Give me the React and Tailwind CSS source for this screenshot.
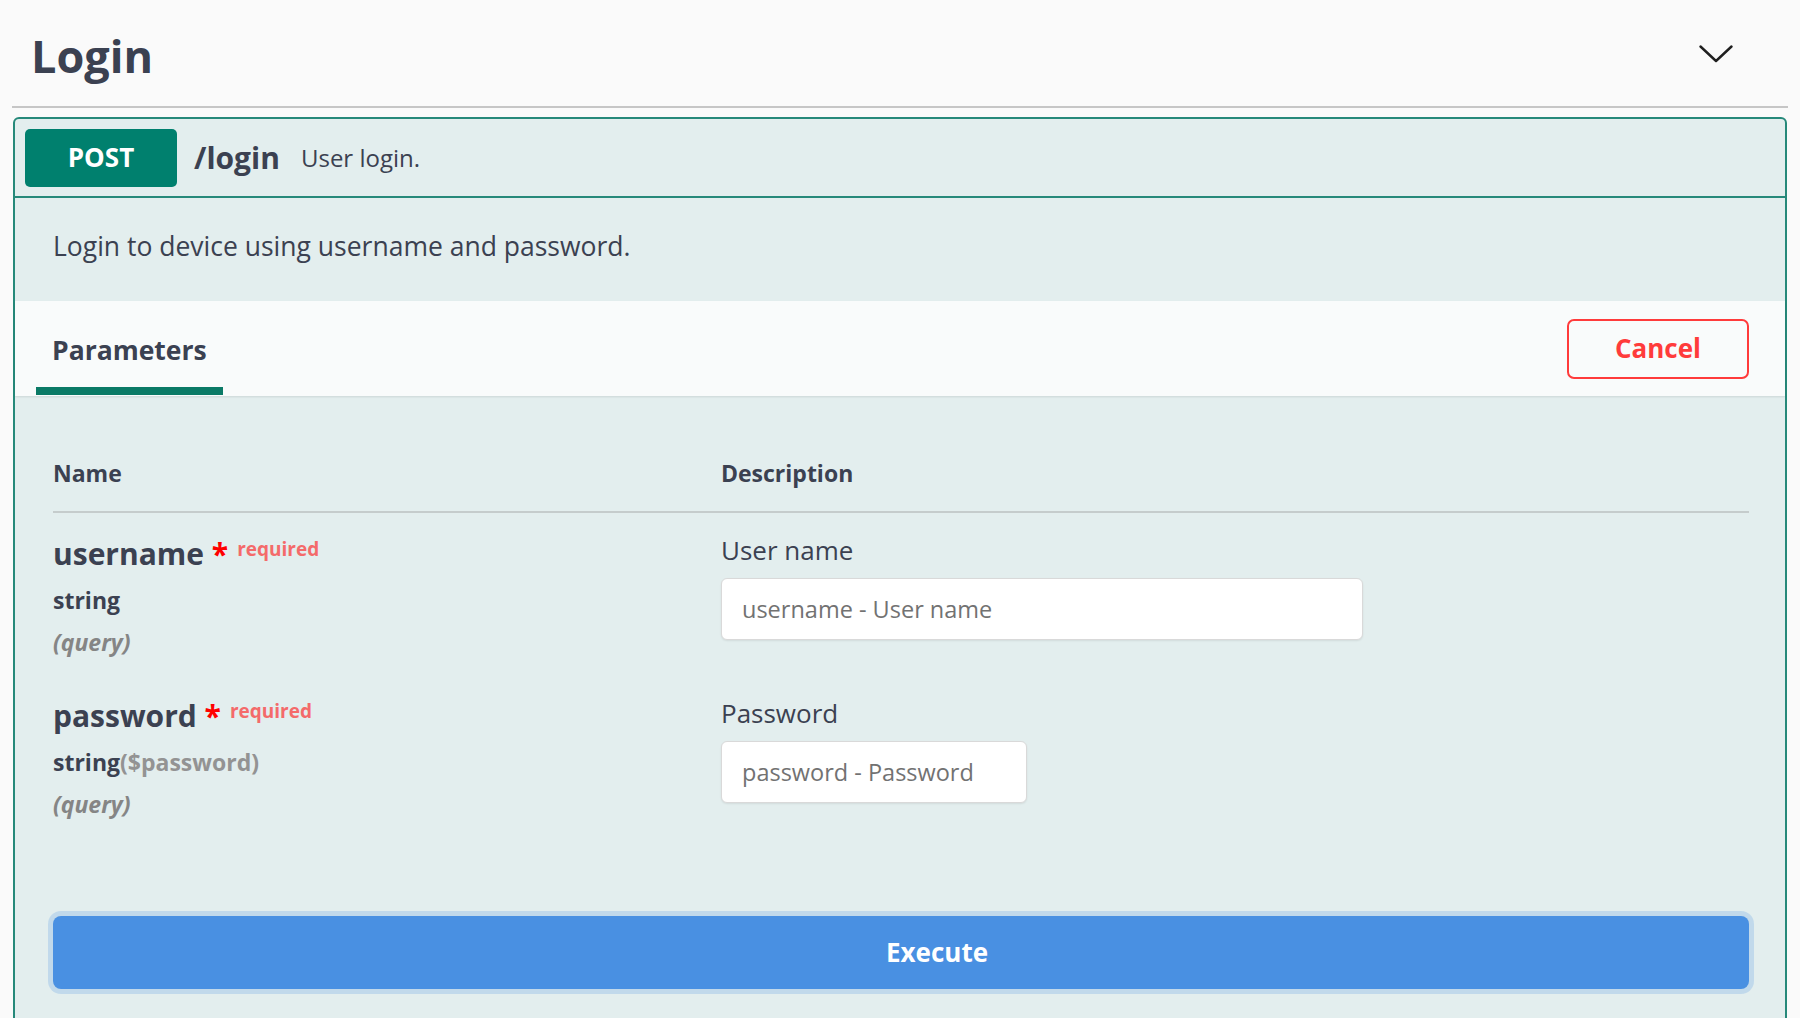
import React from 'react';

const params = [
  { name: 'username', type: 'string', format: null, label: 'User name', placeholder: 'username - User name', width: 'w-[642px]' },
  { name: 'password', type: 'string', format: '($password)', label: 'Password', placeholder: 'password - Password', width: 'w-[306px]' },
];

const Chevron = () => (
  <svg width="34" height="18" viewBox="0 0 34 18" fill="none">
    <path d="M1.5 1.5 L17 16 L32.5 1.5" stroke="#1f1f1f" strokeWidth="2.4" strokeLinecap="round" strokeLinejoin="round" />
  </svg>
);

const ParamRow = ({ p, first }) => (
  <div className={`grid grid-cols-[668px_1fr] ${first ? 'pt-[17px]' : 'pt-[36px]'}`}>
    <div className={first ? 'pt-[1px]' : ''}>
      <div className="text-[30px] leading-[36px] font-bold text-[#3b4151] whitespace-nowrap">
        {p.name}
        <span className="text-[#ff0000]"> *</span>
        <span className="ml-[9px] text-[19px] font-bold text-[#f46a6a] align-[9px]">required</span>
      </div>
      <div className="mt-[13px] text-[23px] leading-[30px] font-bold text-[#3b4151]">
        {p.type}
        {p.format && <span className="font-bold text-[#939393]">{p.format}</span>}
      </div>
      <div className="mt-[12px] text-[23px] leading-[30px] font-bold italic text-[#858585]">(query)</div>
    </div>
    <div className="pt-[2px]">
      <div className="text-[26px] leading-[36px] text-[#3b4151]">{p.label}</div>
      <input
        placeholder={p.placeholder}
        className={`mt-[10px] h-[62px] ${p.width} bg-white border border-[#d9d9d9] rounded-[6px] pl-[20px] text-[23.5px] text-[#3b4151] placeholder:text-[#727272] shadow-[0_1px_2px_rgba(0,0,0,0.08)] outline-none`}
      />
    </div>
  </div>
);

export default function App() {
  return (
    <div className="h-screen overflow-hidden bg-[#fafafa] px-[12px] font-['Open_Sans',sans-serif] text-[#3b4151]">
      <div className="flex items-start justify-between h-[108px] border-b-2 border-[#c6c6c6] pl-[19px] pr-[55px]">
        <h1 className="pt-[26px] text-[45px] leading-[60px] font-bold text-[#3b4151]">Login</h1>
        <div className="mt-[45px]"><Chevron /></div>
      </div>

      <div className="mt-[9px] mx-[1px] border-2 border-[#26897a] rounded-[6px] bg-[#e3eeee]">
        <div className="flex items-center h-[79px] px-[10px] border-b-2 border-[#26897a]">
          <div className="w-[152px] h-[58px] rounded-[5px] bg-[#00806e] flex items-center justify-center text-white text-[26px] font-bold">POST</div>
          <span className="ml-[17px] text-[30px] font-bold text-[#3b4151]">/login</span>
          <span className="ml-[21px] text-[24px] text-[#3b4151]">User login.</span>
        </div>

        <div className="pt-[30px] pb-[37px] pl-[38px] text-[26.5px] leading-[36px] text-[#3b4151]">
          Login to device using username and password.
        </div>

        <div className="flex justify-between h-[95px] bg-[#f9fbfb] shadow-[0_1px_2px_rgba(0,0,0,0.1)] pl-[21px] pr-[36px]">
          <div className="flex flex-col pt-[31px]">
            <div className="px-[16px] text-[26.5px] leading-[36px] font-bold text-[#3b4151]">Parameters</div>
            <div className="mt-[19px] h-[8px] bg-[#0b7a66]" />
          </div>
          <button className="self-center w-[182px] h-[60px] rounded-[7px] border-2 border-[#ff3b3b] text-[#ff3b3b] text-[26px] font-bold">Cancel</button>
        </div>

        <div className="pl-[38px] pr-[36px] pb-[40px]">
          <div className="grid grid-cols-[668px_1fr] pt-[62px] pb-[23px] border-b-2 border-[#c5cccc] text-[23px] leading-[30px] font-bold text-[#3b4151]">
            <div>Name</div>
            <div>Description</div>
          </div>
          {params.map((p, i) => (
            <ParamRow key={p.name} p={p} first={i === 0} />
          ))}
          <button className="mt-[97px] w-full h-[73px] rounded-[8px] bg-[#4990e2] shadow-[0_0_0_5px_rgba(73,144,226,0.22)] pl-[72px] text-white text-[26px] font-bold">
            Execute
          </button>
        </div>
      </div>
    </div>
  );
}
